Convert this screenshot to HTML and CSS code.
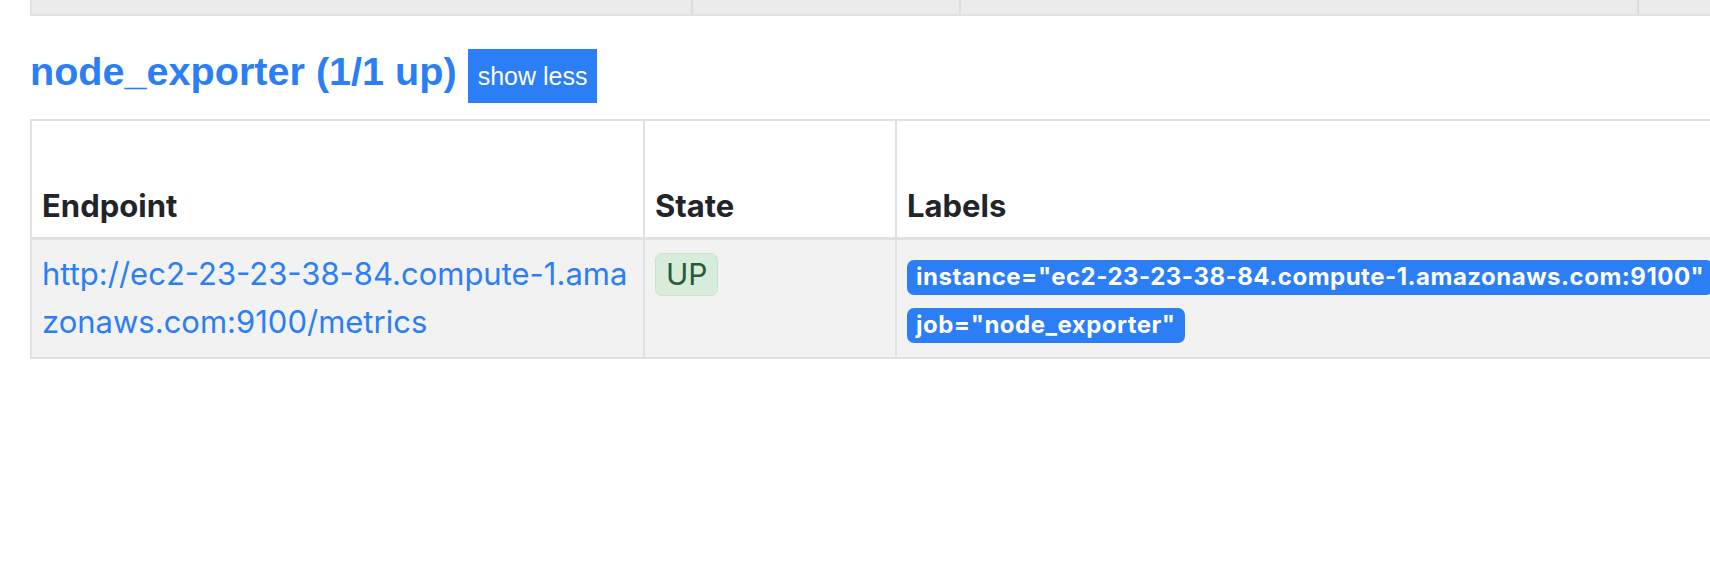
FILE: index.html
```html
<!DOCTYPE html>
<html lang="en">
<head>
<meta charset="utf-8">
<title>Targets</title>
<link rel="stylesheet" href="styles.css">
</head>
<body>
<div class="page">
  <div class="clip">
    <table class="prev-table">
      <colgroup>
        <col class="pc1"><col class="pc2"><col class="pc3"><col class="pc4">
      </colgroup>
      <tbody>
        <tr><td></td><td></td><td></td><td></td></tr>
      </tbody>
    </table>
  </div>

  <h2 class="job-title"><a class="job-link" href="#job-node_exporter">node_exporter (1/1 up)</a> <button class="toggle-btn">show less</button></h2>

  <div class="clip">
    <table class="targets">
      <colgroup>
        <col class="c-endpoint"><col class="c-state"><col class="c-labels"><col class="c-rest">
      </colgroup>
      <thead>
        <tr>
          <th>Endpoint</th>
          <th>State</th>
          <th>Labels</th>
          <th></th>
        </tr>
      </thead>
      <tbody>
        <tr class="striped">
          <td class="endpoint"><a class="endpoint-link" href="#">http://ec2-23-23-38-84.compute-1.amazonaws.com:9100/metrics</a></td>
          <td><span class="state-up">UP</span></td>
          <td class="labels"><span class="label-badge">instance="ec2-23-23-38-84.compute-1.amazonaws.com:9100"</span><br><span class="label-badge">job="node_exporter"</span></td>
          <td></td>
        </tr>
      </tbody>
    </table>
  </div>
</div>
</body>
</html>
```

FILE: styles.css
```css
html, body {
  margin: 0;
  padding: 0;
  background: #ffffff;
}

body {
  font-family: "Liberation Sans", Arial, sans-serif;
  color: #212529;
}

.page {
  padding-left: 30px;
}

.clip {
  overflow: hidden;
  width: 1680px;
}

/* previous job's table, only its last row is visible */
.prev-table {
  border-collapse: separate;
  border-spacing: 0;
  table-layout: fixed;
  width: 1900px;
  border-left: 2px solid #dee2e6;
}

.pc1 { width: 661px; }
.pc2 { width: 268px; }
.pc3 { width: 678px; }
.pc4 { width: 293px; }

.prev-table td {
  height: 14px;
  padding: 0;
  background: #ebebeb;
  border-right: 2px solid #dcdcdc;
  border-bottom: 2px solid #dee2e6;
}

/* heading */
.job-title {
  margin: 32px 0 16px;
  font-size: 39.6px;
  font-weight: bold;
  line-height: 1.2;
}

.job-link {
  color: #2b7ef6;
  text-decoration: none;
}

.toggle-btn {
  display: inline-block;
  font-family: "Liberation Sans", Arial, sans-serif;
  font-size: 25px;
  line-height: 1.5;
  font-weight: normal;
  color: #ffffff;
  background: #2b7ef6;
  border: 0;
  border-radius: 0;
  padding: 9px 10px 7.5px;
  margin: 0;
  vertical-align: baseline;
}

/* targets table */
.targets {
  border-collapse: separate;
  border-spacing: 0;
  table-layout: fixed;
  width: 2200px;
  border-top: 2px solid #dee2e6;
  border-left: 2px solid #dee2e6;
  font-family: Inter, "Liberation Sans", sans-serif;
  font-size: 31px;
  line-height: 48px;
}

.c-endpoint { width: 613px; }
.c-state { width: 252px; }
.c-labels { width: 1000px; }
.c-rest { width: 335px; }

.targets th {
  text-align: left;
  vertical-align: bottom;
  font-weight: 700;
  color: #212529;
  padding: 61px 10px 7px;
  border-right: 2px solid #dee2e6;
  border-bottom: 3px solid #dee2e6;
}

.targets td {
  vertical-align: top;
  padding: 10px 10px 10.5px;
  border-right: 2px solid #dee2e6;
  border-bottom: 2px solid #dee2e6;
}

.striped td {
  background: #f2f2f2;
}

.endpoint {
  word-break: break-all;
}

.endpoint-link {
  color: #2b7ef6;
  text-decoration: none;
}

.state-up {
  display: inline-block;
  font-size: 30px;
  line-height: 1;
  padding: 5.5px 10px;
  color: #2a5b31;
  background: #d8ecdc;
  border: 1px solid #c6e5cc;
  border-radius: 7px;
}

.label-badge {
  display: inline-block;
  font-size: 24px;
  font-weight: 700;
  line-height: 1;
  letter-spacing: 0.5px;
  padding: 5.5px 9px;
  color: #ffffff;
  background: #2b7ef6;
  border-radius: 7px;
  white-space: nowrap;
}
```
